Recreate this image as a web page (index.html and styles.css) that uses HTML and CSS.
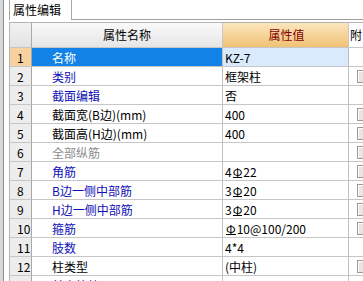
FILE: index.html
```html
<!DOCTYPE html>
<html lang="zh-CN">
<head>
  <meta charset="UTF-8" />
  <title>属性编辑</title>
  <link rel="stylesheet" href="styles.css">
</head>
<body>
  <div class="frame">
    <div class="edge"></div>
    <div class="panel">
      <div class="tabs">
        <div class="tab">属性编辑</div>
        <div class="tab-line"></div>
      </div>

      <div class="grid">
        <div class="row head">
          <div class="num"></div>
          <div class="name">属性名称</div>
          <div class="val">属性值</div>
          <div class="extra">附</div>
        </div>

        <div class="row cur">
          <div class="num">1</div>
          <div class="name">名称</div>
          <div class="val">KZ-7</div>
          <div class="extra"></div>
        </div>
        <div class="row">
          <div class="num">2</div>
          <div class="name blue">类别</div>
          <div class="val">框架柱</div>
          <div class="extra"><span class="chk"></span></div>
        </div>
        <div class="row">
          <div class="num">3</div>
          <div class="name blue">截面编辑</div>
          <div class="val">否</div>
          <div class="extra"></div>
        </div>
        <div class="row">
          <div class="num">4</div>
          <div class="name">截面宽(B边)(mm)</div>
          <div class="val">400</div>
          <div class="extra"><span class="chk"></span></div>
        </div>
        <div class="row">
          <div class="num">5</div>
          <div class="name">截面高(H边)(mm)</div>
          <div class="val">400</div>
          <div class="extra"><span class="chk"></span></div>
        </div>
        <div class="row">
          <div class="num">6</div>
          <div class="name gray">全部纵筋</div>
          <div class="val"></div>
          <div class="extra"><span class="chk"></span></div>
        </div>
        <div class="row">
          <div class="num">7</div>
          <div class="name blue">角筋</div>
          <div class="val">4<span class="bar">Φ</span>22</div>
          <div class="extra"><span class="chk"></span></div>
        </div>
        <div class="row">
          <div class="num">8</div>
          <div class="name blue">B边一侧中部筋</div>
          <div class="val">3<span class="bar">Φ</span>20</div>
          <div class="extra"><span class="chk"></span></div>
        </div>
        <div class="row">
          <div class="num">9</div>
          <div class="name blue">H边一侧中部筋</div>
          <div class="val">3<span class="bar">Φ</span>20</div>
          <div class="extra"><span class="chk"></span></div>
        </div>
        <div class="row">
          <div class="num">10</div>
          <div class="name blue">箍筋</div>
          <div class="val"><span class="bar">Φ</span>10@100/200</div>
          <div class="extra"><span class="chk"></span></div>
        </div>
        <div class="row">
          <div class="num">11</div>
          <div class="name blue">肢数</div>
          <div class="val">4*4</div>
          <div class="extra"></div>
        </div>
        <div class="row">
          <div class="num">12</div>
          <div class="name">柱类型</div>
          <div class="val">(中柱)</div>
          <div class="extra"><span class="chk"></span></div>
        </div>
        <div class="row">
          <div class="num">13</div>
          <div class="name blue">其它箍筋</div>
          <div class="val"></div>
          <div class="extra"></div>
        </div>
      </div>
    </div>
  </div>
</body>
</html>
```

FILE: styles.css
```css
body {
  margin: 0;
  width: 363px;
  height: 281px;
  overflow: hidden;
  background: #fff;
  font-family: "Noto Sans CJK SC", "DejaVu Sans", sans-serif;
  font-size: 12px;
  color: #000;
}

.frame {
  display: flex;
  height: 281px;
}

.edge {
  width: 3px;
  flex-shrink: 0;
  background: #d8d8d8;
  border-right: 1px solid #8c8c8c;
}

.panel {
  flex: 1;
  padding-left: 5px;
  overflow: hidden;
}

/* tab strip */
.tabs {
  display: flex;
  height: 20px;
}

.tab {
  width: 58px;
  padding-left: 3px;
  border-left: 1px solid #a8a8a8;
  border-right: 1px solid #a8a8a8;
  line-height: 19px;
  font-size: 12px;
}

.tab-line {
  flex: 1;
  height: 19px;
  border-bottom: 1px solid #a0a0a0;
}

/* property grid */
.grid {
  margin-top: 2px;
  border-left: 1px solid #b4b4b4;
  border-top: 1px solid #b4b4b4;
  width: 400px;
}

.row {
  display: grid;
  grid-template-columns: 22px 191px 126px 61px;
  height: 19px;
}

.row > div {
  box-sizing: border-box;
  border-right: 1px solid #c0c0c0;
  border-bottom: 1px solid #c6c6c6;
  white-space: nowrap;
  overflow: hidden;
  line-height: 19px;
}

.num {
  background: #ededed;
  padding-left: 7px;
  border-right-color: #a8a8a8 !important;
}

.name {
  padding-left: 20px;
}

.val {
  padding-left: 2px;
}

.extra {
  display: flex;
  align-items: center;
}

.blue { color: #1010b8; }
.gray { color: #8c8c8c; }

.bar {
  display: inline-block;
  line-height: 10px;
  border-bottom: 1px solid #000;
  margin: 0 1px;
}

.chk {
  display: block;
  margin-left: 8px;
  width: 12px;
  height: 11px;
  border: 1px solid #9a9a9a;
  background: #e6e6e6;
  box-shadow: inset 1px 1px 0 #fff;
}

/* header row */
.head {
  height: 25px;
}

.head > div {
  line-height: 24px;
  background: linear-gradient(#fafafa, #e6e6e6);
  border-right-color: #c8c8c8;
}

.head .num {
  background: linear-gradient(#f2f2f2, #e2e2e2);
}

.head .name {
  padding-left: 0;
  text-align: center;
}

.head .val {
  text-align: center;
  color: #820000;
  background: linear-gradient(#fbe6bf, #f1c274);
}

.head .extra {
  background: #fff;
  padding-left: 1px;
}

/* current row */
.cur .num { background: #f8d29e; }
.cur .name { background: #1282e6; color: #fff; }
.cur .val { background: #d8eafb; }
```
